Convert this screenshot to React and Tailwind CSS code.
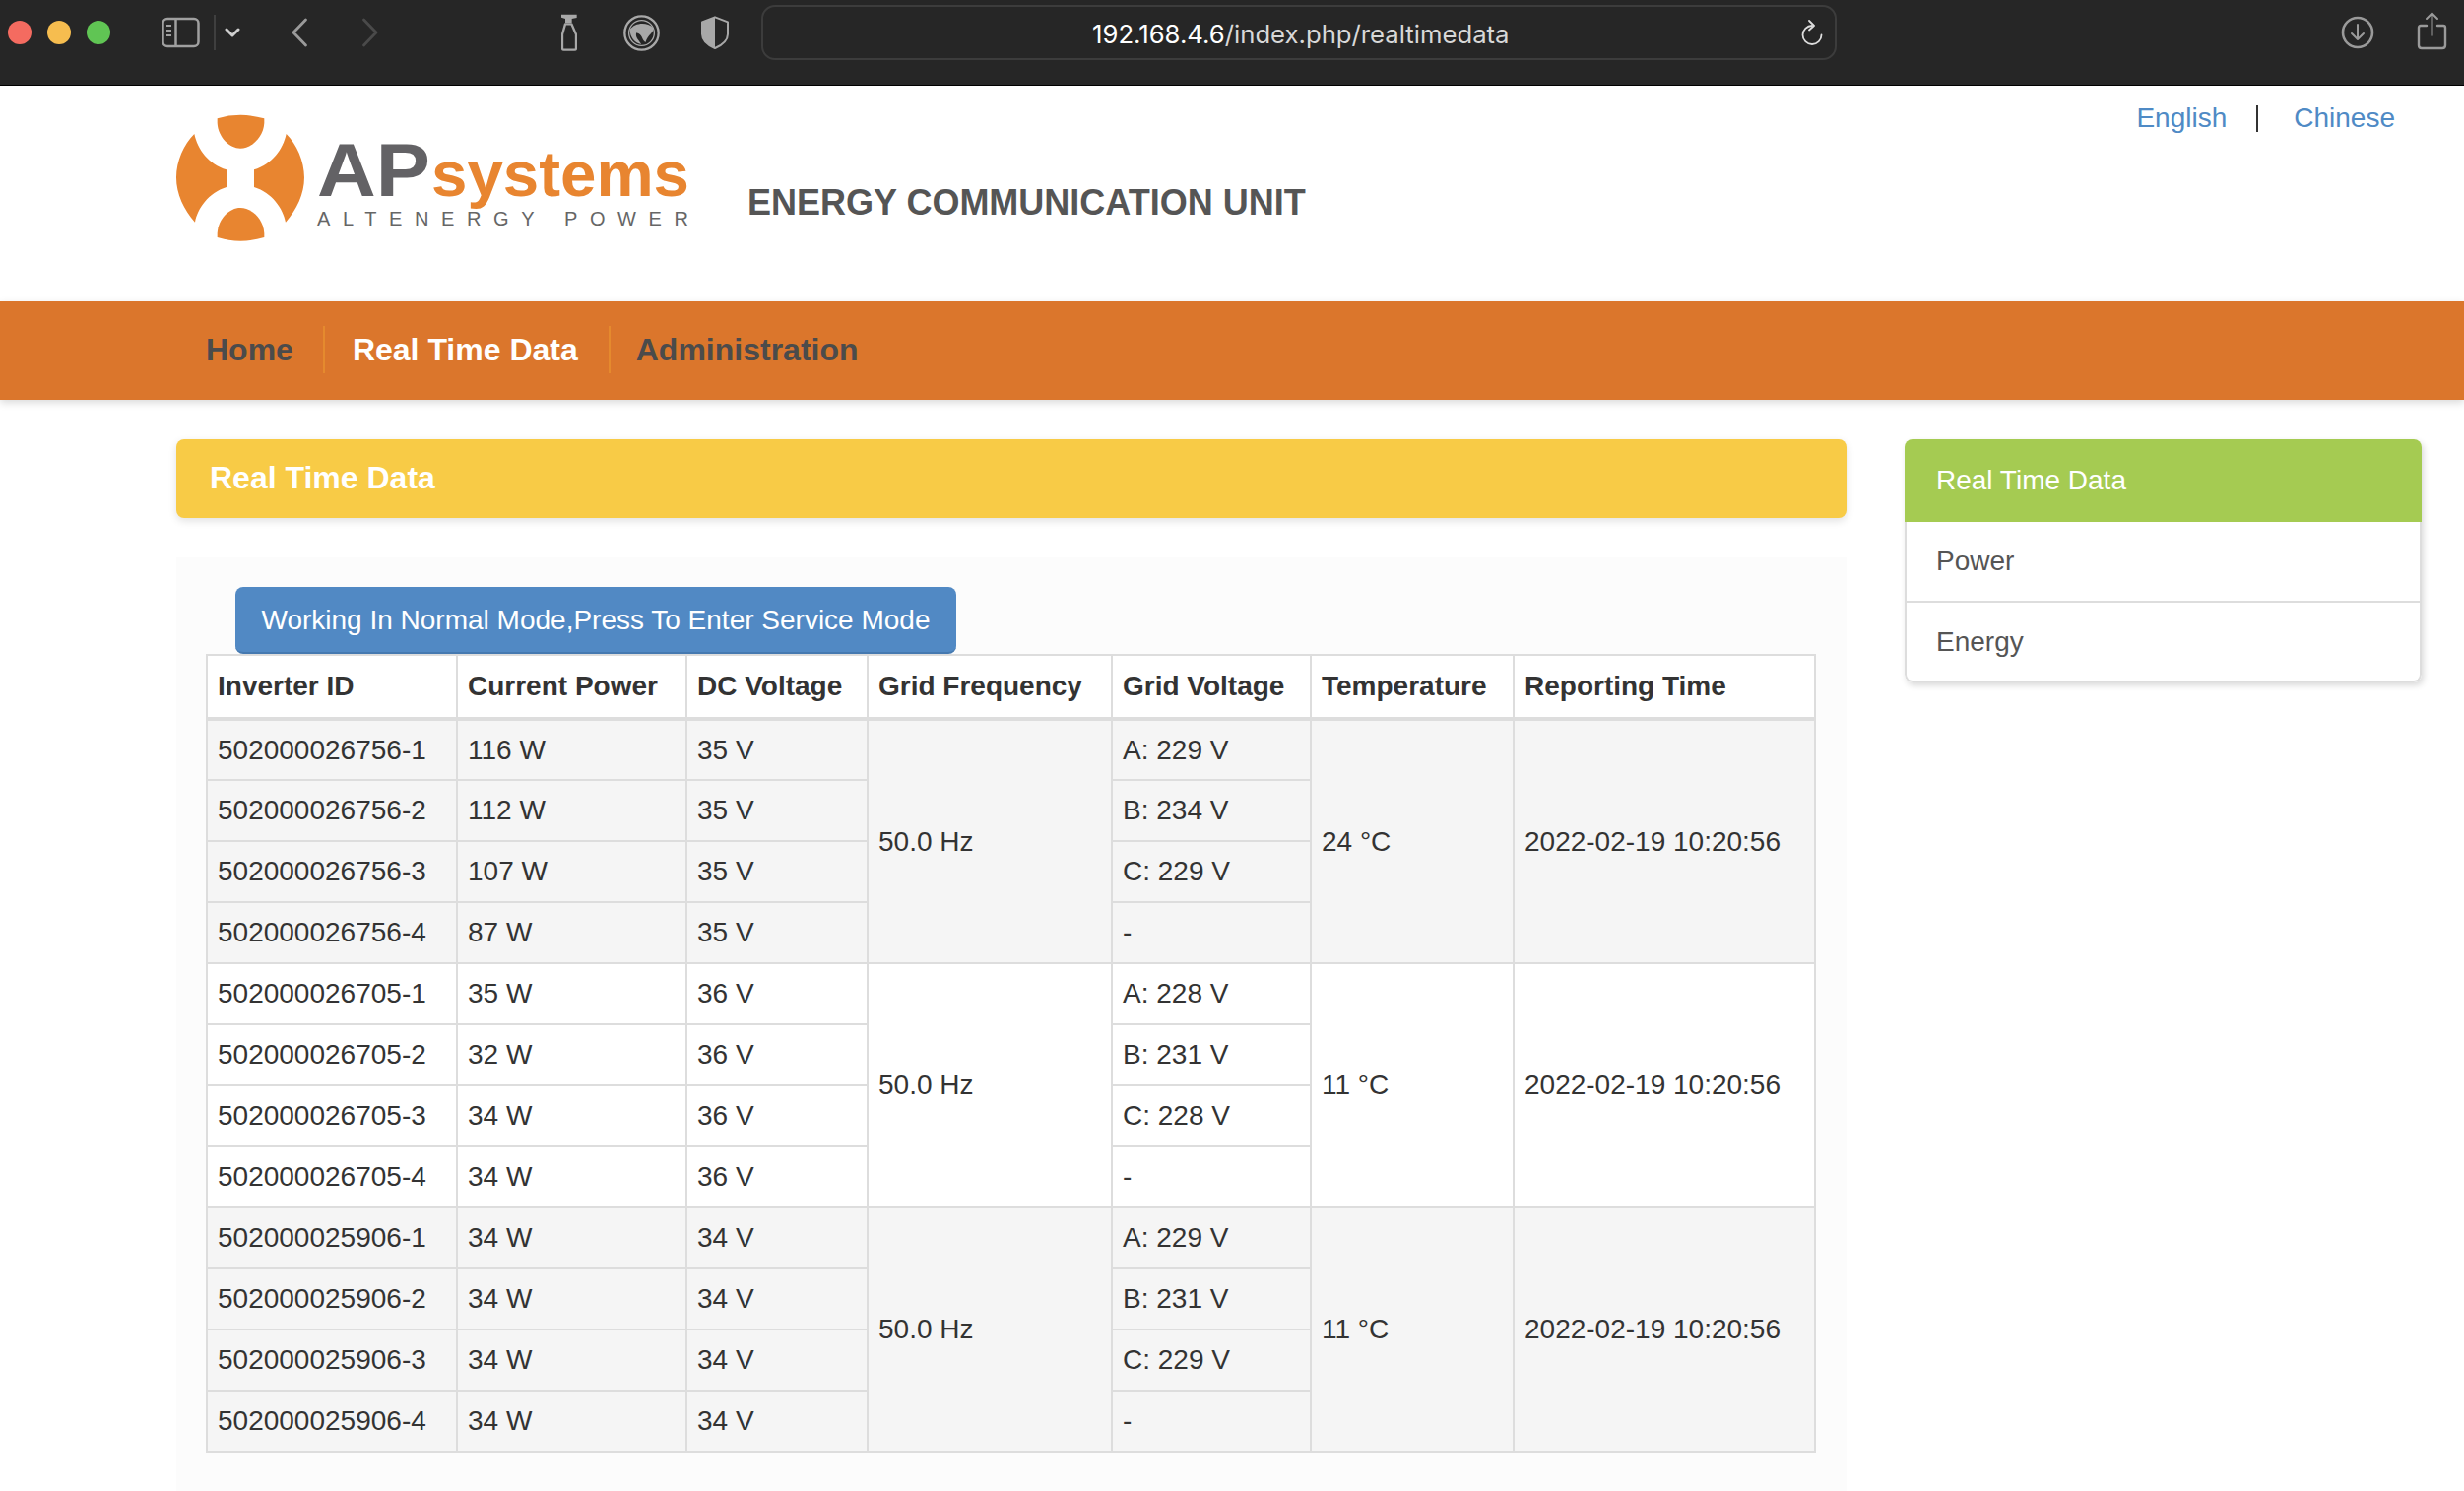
const groups = [
  {
    id: '502000026756',
    power: ['116 W', '112 W', '107 W', '87 W'],
    dc: '35 V',
    volts: ['A: 229 V', 'B: 234 V', 'C: 229 V', '-'],
    temp: '24 °C',
    bg: 'bg-[#f5f5f5]',
  },
  {
    id: '502000026705',
    power: ['35 W', '32 W', '34 W', '34 W'],
    dc: '36 V',
    volts: ['A: 228 V', 'B: 231 V', 'C: 228 V', '-'],
    temp: '11 °C',
    bg: 'bg-white',
  },
  {
    id: '502000025906',
    power: ['34 W', '34 W', '34 W', '34 W'],
    dc: '34 V',
    volts: ['A: 229 V', 'B: 231 V', 'C: 229 V', '-'],
    temp: '11 °C',
    bg: 'bg-[#f5f5f5]',
  },
];

const headers = ['Inverter ID', 'Current Power', 'DC Voltage', 'Grid Frequency', 'Grid Voltage', 'Temperature', 'Reporting Time'];
const colWidths = ['w-[254px]', 'w-[233px]', 'w-[184px]', 'w-[248px]', 'w-[202px]', 'w-[206px]', 'w-[306px]'];
const cell = 'border-2 border-[#ddd] px-[10px] py-0 text-left align-middle';

function BrowserBar() {
  return (
    <div className="flex h-[87px] items-center border-b border-black bg-[#262626] pb-[20px] pl-[8px]">
      <div className="flex gap-[16px]">
        <span className="h-[24px] w-[24px] rounded-full bg-[#f46b60]" />
        <span className="h-[24px] w-[24px] rounded-full bg-[#f6bd4f]" />
        <span className="h-[24px] w-[24px] rounded-full bg-[#60c554]" />
      </div>
      {/* sidebar toggle */}
      <svg className="ml-[52px]" width="39" height="32" viewBox="0 0 39 32" fill="none" stroke="#a0a0a0" strokeWidth="2.5">
        <rect x="1.5" y="2" width="36" height="28" rx="4.5" />
        <path d="M14.5 2V30" />
        <path d="M5 9H10M5 14H10M5 19H10" strokeWidth="2" />
      </svg>
      <span className="ml-[14px] h-[36px] w-[2px] bg-[#3f3f3f]" />
      <svg className="ml-[9px]" width="16" height="10" viewBox="0 0 16 10" fill="none" stroke="#cfcfcf" strokeWidth="3" strokeLinecap="round" strokeLinejoin="round">
        <path d="M2 2L8 8L14 2" />
      </svg>
      <svg className="ml-[51px]" width="18" height="30" viewBox="0 0 18 30" fill="none" stroke="#9a9a9a" strokeWidth="2.8" strokeLinecap="round" strokeLinejoin="round">
        <path d="M15.5 2L3 15L15.5 28" />
      </svg>
      <svg className="ml-[54px]" width="18" height="30" viewBox="0 0 18 30" fill="none" stroke="#4a4a4a" strokeWidth="2.8" strokeLinecap="round" strokeLinejoin="round">
        <path d="M2.5 2L15 15L2.5 28" />
      </svg>
      {/* spray bottle */}
      <svg className="ml-[185px]" width="16" height="38" viewBox="60 45 48 114">
        <path d="M60 47H107V57L92 60V72H72V60L60 56Z" fill="#a8a8a8" />
        <path d="M72 76L63 108V150Q63 155 68 155H100Q105 155 105 150V108L91 76Z" fill="none" stroke="#a8a8a8" strokeWidth="7" strokeLinejoin="round" />
      </svg>
      {/* globe */}
      <svg className="ml-[47px]" width="37" height="37" viewBox="250 45 112 112">
        <circle cx="306" cy="101" r="52" fill="none" stroke="#a8a8a8" strokeWidth="7" />
        <circle cx="306" cy="101" r="39" fill="none" stroke="#a8a8a8" strokeWidth="4" />
        <path d="M270 90C285 70 320 65 342 85C345 100 325 105 318 130C305 120 310 105 290 100C285 115 300 125 305 136C285 132 270 115 270 90Z" fill="#a8a8a8" />
      </svg>
      {/* shield */}
      <svg className="ml-[42px]" width="28" height="34" viewBox="488 50 84 100">
        <path d="M530 53L569 68V105C569 125 550 139 530 148C510 139 491 125 491 105V68Z" fill="none" stroke="#a8a8a8" strokeWidth="6" strokeLinejoin="round" />
        <path d="M530 53L491 68V105C491 125 510 139 530 148Z" fill="#a8a8a8" />
      </svg>
      {/* address bar */}
      <div className="ml-[33px] flex h-[56px] w-[1092px] items-center rounded-[14px] border-2 border-[#3c3c3c] pl-[334px] font-['Inter',sans-serif] text-[25.7px] text-[#d8d8d8]">
        <span className="pt-[3px] text-white">192.168.4.6</span>
        <span className="pt-[3px]">/index.php/realtimedata</span>
        <svg className="ml-auto mr-[11px]" width="23" height="26" viewBox="0 0 23 26" fill="none" stroke="#dddddd" strokeWidth="1.8" strokeLinecap="round" strokeLinejoin="round">
          <path d="M11 6A9.5 9.5 0 1 0 20.5 15.5" />
          <path d="M8 1L13 6L8 10.5" />
        </svg>
      </div>
      <svg className="ml-[512px]" width="34" height="34" viewBox="0 0 34 34" fill="none" stroke="#9a9a9a" strokeWidth="2.6" strokeLinecap="round" strokeLinejoin="round">
        <circle cx="17" cy="17" r="15" />
        <path d="M17 9V24M11 18L17 24L23 18" strokeWidth="2" />
      </svg>
      <svg className="ml-[43px] mb-[4px]" width="31" height="39" viewBox="0 0 31 39" fill="none" stroke="#9a9a9a" strokeWidth="2.4" strokeLinecap="round" strokeLinejoin="round">
        <path d="M10 14H4Q2 14 2 16V34Q2 37 5 37H26Q29 37 29 34V16Q29 14 27 14H21" />
        <path d="M15.5 24V2M10 7L15.5 1.5L21 7" strokeWidth="2" />
      </svg>
    </div>
  );
}

function Logo() {
  return (
    <svg width="535" height="145" viewBox="0 0 535 145">
      <g transform="scale(0.3333)" fill="#e88530">
        <path d="M152 46Q222 25 295 46V60C292 105 255 137 222 137C190 137 155 105 152 60Z" />
        <path d="M152 408Q222 430 295 408V395C292 350 255 318 222 318C190 318 155 350 152 395Z" />
        <path d="M82 93C50 125 27 175 27 226C27 275 50 325 84 362C92 320 125 272 180 255V202C125 185 92 140 82 93Z" />
        <path d="M362 93C394 125 417 175 417 226C417 275 394 325 360 362C352 320 319 272 264 255V202C319 185 352 140 362 93Z" />
      </g>
      <text x="152" y="94" fontSize="76" fontWeight="700" fill="#636265" textLength="115" lengthAdjust="spacingAndGlyphs">AP</text>
      <text x="268" y="94" fontSize="65" fontWeight="700" fill="#e88530" textLength="262" lengthAdjust="spacingAndGlyphs">systems</text>
      <text x="152" y="124" fontSize="20" fill="#666666" textLength="377">ALTENERGY POWER</text>
    </svg>
  );
}

function InverterRows({ group }) {
  return group.power.map((power, i) => (
    <tr key={i} className={`h-[62px] ${group.bg}`}>
      <td className={cell}>{group.id}-{i + 1}</td>
      <td className={cell}>{power}</td>
      <td className={cell}>{group.dc}</td>
      {i === 0 && <td rowSpan={4} className={cell}>50.0 Hz</td>}
      <td className={cell}>{group.volts[i]}</td>
      {i === 0 && <td rowSpan={4} className={cell}>{group.temp}</td>}
      {i === 0 && <td rowSpan={4} className={cell}>2022-02-19 10:20:56</td>}
    </tr>
  ));
}

export default function App() {
  return (
    <div className="h-[1514px] overflow-hidden bg-white font-['Liberation_Sans',Arial,sans-serif] text-[28px] leading-[40px] text-[#333]">
      <BrowserBar />

      <header className="flex h-[219px] items-start pl-[170px] pt-[18px]">
        <Logo />
        <h1 className="ml-[54px] mt-[81px] text-[36px] font-bold leading-[40px] text-[#555]">ENERGY COMMUNICATION UNIT</h1>
        <div className="ml-auto mr-[70px] -mt-[5px] flex items-center text-[#4f8ac5]">
          <span>English</span>
          <span className="ml-[30px] mr-[36px] h-[27px] w-[2px] bg-[#333]" />
          <span>Chinese</span>
        </div>
      </header>

      <nav className="flex h-[100px] items-center bg-[#db762c] pb-[2px] pl-[179px] text-[32px] font-bold leading-[48px] text-[#4b4b4b] shadow-[0_3px_8px_rgba(0,0,0,0.15)]">
        <span className="border-r-2 border-[#e58a2e] pl-[30px] pr-[30px]">Home</span>
        <span className="border-r-2 border-[#e58a2e] pl-[28px] pr-[31px] text-white">Real Time Data</span>
        <span className="pl-[26px]">Administration</span>
      </nav>

      <main className="ml-[179px] mt-[40px] flex gap-[59px]">
        <section className="w-[1696px]">
          <div className="flex h-[80px] items-center rounded-lg bg-[#f8cb46] pb-[2px] pl-[34px] text-[32px] font-bold text-white shadow-[0_3px_8px_rgba(0,0,0,0.12)]">
            Real Time Data
          </div>
          <div className="mt-[40px] bg-[#fcfcfc] px-[30px] pb-[60px] pt-[30px]">
            <button className="ml-[30px] block h-[68px] w-[732px] rounded-lg border-b-2 border-[#4579b0] bg-[#5189c4] pt-[2px] text-white">
              Working In Normal Mode,Press To Enter Service Mode
            </button>
            <table className="w-[1635px] table-fixed border-collapse">
              <colgroup>
                {colWidths.map((w) => <col key={w} className={w} />)}
              </colgroup>
              <thead>
                <tr className="h-[65px] bg-white">
                  {headers.map((h) => (
                    <th key={h} className="border-2 border-b-4 border-[#ddd] px-[10px] py-0 text-left align-middle font-bold">{h}</th>
                  ))}
                </tr>
              </thead>
              <tbody>
                {groups.map((g) => <InverterRows key={g.id} group={g} />)}
              </tbody>
            </table>
          </div>
        </section>

        <aside className="h-[247px] w-[525px] overflow-hidden rounded-lg text-[#555] shadow-[2px_3px_6px_rgba(0,0,0,0.15)]">
          <div className="flex h-[84px] items-center bg-[#a5cb52] pl-[32px] text-white">Real Time Data</div>
          <div className="flex h-[82px] items-center border-x-2 border-b-2 border-[#ddd] bg-white pl-[30px]">Power</div>
          <div className="flex h-[81px] items-center rounded-b-lg border-x-2 border-b-2 border-[#ddd] bg-white pl-[30px]">Energy</div>
        </aside>
      </main>
    </div>
  );
}
